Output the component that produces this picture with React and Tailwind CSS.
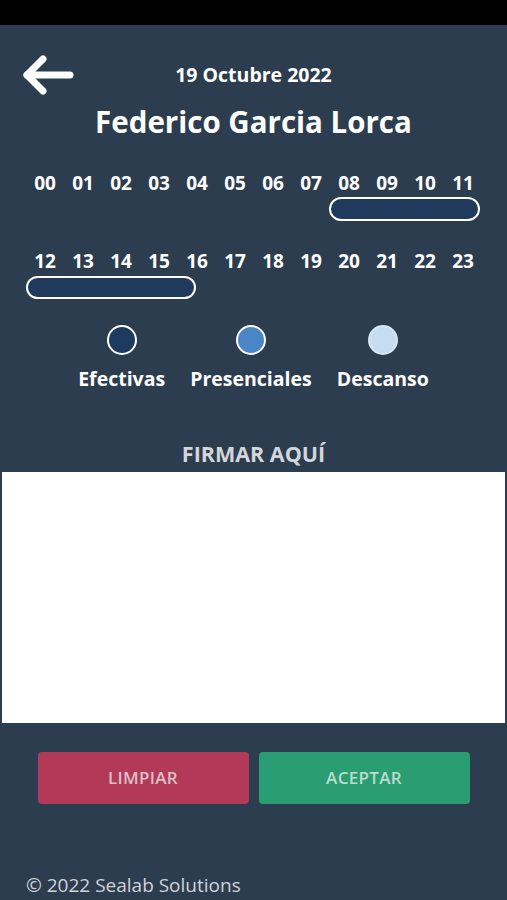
import React from 'react';

export default function App() {
  const row1 = ['00', '01', '02', '03', '04', '05', '06', '07', '08', '09', '10', '11'];
  const row2 = ['12', '13', '14', '15', '16', '17', '18', '19', '20', '21', '22', '23'];

  const legend = [
    { label: 'Efectivas', dot: 'bg-[#1e3a5f] border-2 border-white' },
    { label: 'Presenciales', dot: 'bg-[#4a86c6] border-2 border-white' },
    { label: 'Descanso', dot: 'bg-[#c6ddf1] border-2 border-[#d6e6f4]' },
  ];

  return (
    <div className="w-[507px] h-[900px] overflow-hidden bg-[#2d3d50] text-white font-['Open_Sans',sans-serif] flex flex-col">
      {/* barra superior */}
      <div className="h-[25px] bg-black shrink-0" />

      {/* cabecera */}
      <div className="pt-[25px] grid grid-cols-[1fr_auto_1fr] items-center h-[75px]">
        <div className="pl-[20px] flex items-center">
          <svg width="56" height="48" viewBox="0 0 56 48" fill="none" stroke="white" strokeWidth="7" strokeLinecap="round" strokeLinejoin="round">
            <path d="M50 24H7" />
            <path d="M23 8L7 24L23 40" />
          </svg>
        </div>
        <div className="text-[19.5px] font-bold leading-[24px]">19 Octubre 2022</div>
        <div />
      </div>
      <h1 className="mt-[3px] text-center text-[29.5px] font-bold leading-[38px]">Federico Garcia Lorca</h1>

      {/* horas */}
      <div className="mt-[30px] ml-[26px] w-[456px] grid grid-cols-12">
        {row1.map((h) => (
          <div key={h} className="text-center text-[19px] font-bold leading-[24px]">{h}</div>
        ))}
        <div className="col-start-9 col-span-4 mt-[2px] h-[24px] w-[151px] -ml-[1px] rounded-full border-2 border-white bg-[#1f3a5c]" />
      </div>

      <div className="mt-[28px] ml-[26px] w-[456px] grid grid-cols-12">
        {row2.map((h) => (
          <div key={h} className="text-center text-[19px] font-bold leading-[24px]">{h}</div>
        ))}
        <div className="col-start-1 col-span-5 mt-[3px] h-[23px] w-[170px] rounded-full border-2 border-white bg-[#1f3a5c]" />
      </div>

      {/* leyenda */}
      <div className="mt-[26px] flex justify-center gap-[25px]">
        {legend.map((l) => (
          <div key={l.label} className="flex flex-col items-center">
            <span className={`block h-[30px] w-[30px] rounded-full ${l.dot}`} />
            <span className="mt-[12px] text-[19.5px] font-bold leading-[24px]">{l.label}</span>
          </div>
        ))}
      </div>

      {/* firma */}
      <div className="mt-[49px] text-center text-[21.5px] font-bold leading-[28px] text-[#d4d6d9]">FIRMAR AQUÍ</div>
      <div className="mt-[4px] mx-[2px] h-[251px] bg-white" />

      {/* botones */}
      <div className="mt-[29px] flex justify-center gap-[10px]">
        <button className="h-[52px] w-[211px] rounded-[4px] bg-[#b23a58] text-[17px] font-semibold tracking-[0.3px] text-[#dcc0c6]">
          LIMPIAR
        </button>
        <button className="h-[52px] w-[211px] rounded-[4px] bg-[#2a9d72] text-[17px] font-semibold tracking-[0.3px] text-[#bcdccf]">
          ACEPTAR
        </button>
      </div>

      {/* pie */}
      <div className="mt-auto mb-[3px] pl-[26px] text-[19px] leading-[24px] text-[#cfd3d8]">© 2022 Sealab Solutions</div>
    </div>
  );
}
